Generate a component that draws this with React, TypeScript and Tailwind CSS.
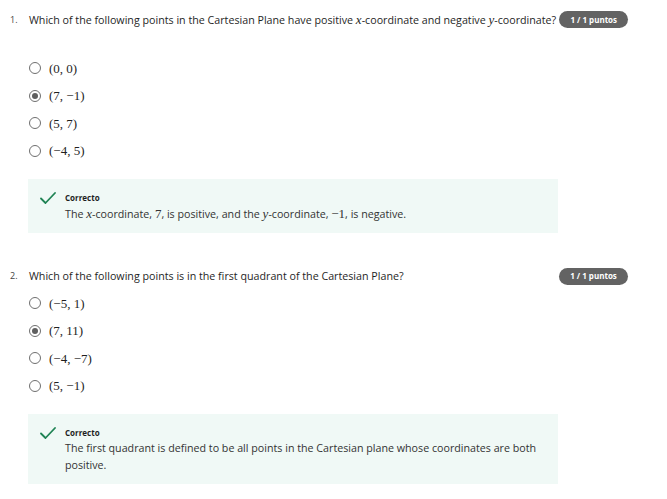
import React from 'react';

type Option = { label: string; checked?: boolean };

interface QuestionProps {
  num: string;
  text: React.ReactNode;
  options: Option[];
  feedback: React.ReactNode;
  gapClass: string;
  topClass: string;
}

const M = ({ children, italic }: { children: React.ReactNode; italic?: boolean }) => (
  <span className={`font-['Liberation_Serif',serif] text-[13px] ${italic ? 'italic' : ''}`}>{children}</span>
);

function Radio({ checked }: { checked?: boolean }) {
  return (
    <span className="flex h-[12px] w-[12px] items-center justify-center rounded-full border-[1.5px] border-[#6f6f6f] bg-white">
      {checked && <span className="h-[6px] w-[6px] rounded-full bg-[#5f5f5f]" />}
    </span>
  );
}

function Check() {
  return (
    <svg width="16" height="12" viewBox="0 0 16 12" fill="none">
      <path d="M1 6.5 L5.5 11 L15 1" stroke="#1f8354" strokeWidth="1.8" strokeLinecap="round" strokeLinejoin="round" />
    </svg>
  );
}

function Question({ num, text, options, feedback, gapClass, topClass }: QuestionProps) {
  return (
    <div className={topClass}>
      <div className="flex items-center">
        <span className="w-[19px] shrink-0 text-[9px] text-[#444]">{num}</span>
        <span className="flex-1 whitespace-nowrap text-[10.7px] text-[#1f1f1f]">{text}</span>
        <span className="ml-[3px] flex h-[17px] w-[69px] shrink-0 items-center justify-center rounded-full bg-[#636363] text-[8px] font-bold text-white">
          1 / 1 puntos
        </span>
      </div>
      <div className={`${gapClass} pl-[19px]`}>
        {options.map((o) => (
          <div key={o.label} className="flex h-[27.5px] items-center gap-[8px] text-[#1f1f1f]">
            <Radio checked={o.checked} />
            <M>{o.label}</M>
          </div>
        ))}
      </div>
      <div className="ml-[18px] mt-[14px] w-[530px] bg-[#f0f9f6] pb-[10px] pl-[12px] pr-[10px] pt-[12px]">
        <div className="flex items-center gap-[9px]">
          <Check />
          <span className="text-[8px] font-bold leading-[14px] text-[#1f1f1f]">Correcto</span>
        </div>
        <div className="pl-[25px] text-[10.7px] leading-[17px] text-[#333]">{feedback}</div>
      </div>
    </div>
  );
}

export default function App() {
  return (
    <div className="min-h-[499px] w-[667px] bg-white pl-[10px] pr-[39px] font-['Open_Sans',sans-serif]">
      <Question
        num="1."
        topClass="pt-[10px]"
        gapClass="mt-[25px]"
        text={
          <>
            Which of the following points in the Cartesian Plane have positive <M italic>x</M>-coordinate and
            negative <M italic>y</M>-coordinate?
          </>
        }
        options={[
          { label: '(0, 0)' },
          { label: '(7, −1)', checked: true },
          { label: '(5, 7)' },
          { label: '(−4, 5)' },
        ]}
        feedback={
          <>
            The <M italic>x</M>-coordinate, <M>7</M>, is positive, and the <M italic>y</M>-coordinate, <M>−1</M>, is
            negative.
          </>
        }
      />
      <Question
        num="2."
        topClass="pt-[35px]"
        gapClass="mt-[5px]"
        text="Which of the following points is in the first quadrant of the Cartesian Plane?"
        options={[
          { label: '(−5, 1)' },
          { label: '(7, 11)', checked: true },
          { label: '(−4, −7)' },
          { label: '(5, −1)' },
        ]}
        feedback="The first quadrant is defined to be all points in the Cartesian plane whose coordinates are both positive."
      />
    </div>
  );
}
